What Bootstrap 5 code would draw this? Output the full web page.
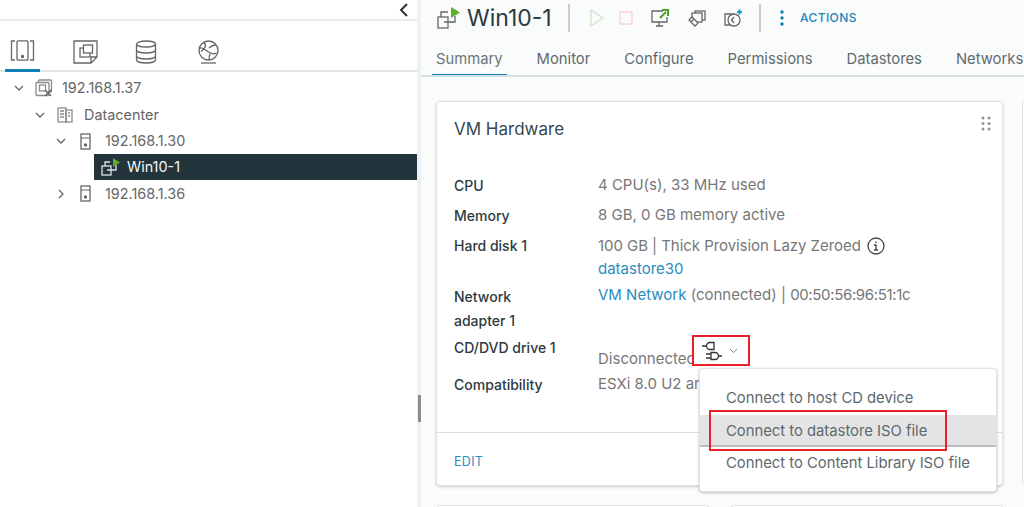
<!DOCTYPE html>
<html lang="en">
<head>
<meta charset="UTF-8" />
<meta name="viewport" content="width=device-width, initial-scale=1" />
<title>Win10-1 - Summary</title>
<link href="https://cdn.jsdelivr.net/npm/bootstrap@5.3.0/dist/css/bootstrap.min.css" rel="stylesheet" />
<script src="https://cdn.jsdelivr.net/npm/bootstrap@5.3.0/dist/js/bootstrap.bundle.min.js"></script>
<style>
    html, body { height: 507px; overflow: hidden; }
    body { font-family: "Inter", "Liberation Sans", sans-serif; font-size: 14px; color: #666; background: #fff; }
    a { text-decoration: none; color: #2b8cbe; }
    svg { display: block; fill: none; stroke: #666; stroke-width: 1.3; }

    /* left tree */
    .side-pane { width: 417px; flex: none; height: 507px; }
    .side-top { height: 21px; border-bottom: 2px solid #e8ecee; padding-right: 8px; }
    .side-tabs { height: 51px; border-bottom: 2px solid #dfe6ea; padding-left: 5px; }
    .side-tab { width: 62px; height: 51px; padding-left: 6px; padding-top: 19px; }
    .side-tab.is-on { width: 35px; margin-right: 27px; padding-left: 5px; border-bottom: 3px solid #0f7fb5; }
    .tree { padding-top: 3px; font-size: 14.4px; }
    .tree-row { height: 26.5px; }
    .tree-arrow { width: 12px; flex: none; }
    .tree-ico { width: 18px; flex: none; margin-left: 10px; }
    .lvl0 { padding-left: 13px; }
    .lvl1 { padding-left: 34px; }
    .lvl2 { padding-left: 55px; }
    .tree-label { margin-left: 9px; }
    .lvl1 .tree-label, .lvl2 .tree-label { margin-left: 10px; }
    .tree-sel { margin: -1px 0 1px 94px; background: #23343d; color: #f4f6f7; height: 26px; padding-left: 7px; }
    .tree-sel .tree-label { margin-left: 7px; }
    .tree-sel svg { stroke: #dfe4e6; }

    .split-bar { width: 4px; flex: none; background: #eef1f3; }
    .split-grip { width: 3px; height: 27px; background: #8b8b8b; margin-top: 395px; margin-left: 1px; }

    /* right pane */
    .main-pane { flex: 1 1 auto; min-width: 0; background: #fafbfb; height: 507px; overflow: hidden; }
    .vm-head { height: 36px; padding-left: 16px; }
    .vm-name { font-size: 23px; color: #2a3a42; margin-left: 7px; line-height: 1; width: 101px; }
    .head-sep { width: 2px; height: 28px; background: #c9cdcf; }
    .act-ico { flex: none; }
    .act-link { font-size: 12px; letter-spacing: .4px; color: #1c85ba; font-weight: 500; }
    .tab-strip { height: 41px; border-bottom: 2px solid #d5dfe4; padding-left: 11px; white-space: nowrap; overflow: hidden; }
    .tab-item { padding: 0 4px; margin-right: 26px; height: 41px; line-height: 46px; color: #5f6b70; font-size: 14.8px; }
    .tab-item.is-on { border-bottom: 3px solid #0f7fb5; color: #6b767b; }
    .cards-wrap { padding: 24px 0 0 15px; gap: 19px; }
    .hw-card { width: 567px; flex: none; height: 385px; border: 1px solid #dfe3e5; border-radius: 4px; box-shadow: 0 1px 3px rgba(0,0,0,.18); background: #fff; position: relative; }
    .hw-next { width: 40px; flex: none; height: 385px; border: 1px solid #dfe3e5; border-radius: 4px; background: #fff; }
    .hw-title { font-size: 17px; color: #37474f; padding: 15px 0 0 17px; height: 73px; }
    .grip-dots { position: absolute; right: 11px; top: 14px; }
    .hw-row { padding-left: 17px; line-height: 21px; }
    .hw-key { width: 144px; flex: none; color: #2d3a40; font-weight: 500; }
    .hw-key-tall { line-height: 24px; margin-top: -1px; }
    .hw-val { color: #777; font-size: 15px; margin-top: -1px; }
    .hw-val-low { margin-top: 11px; }
    .hw-val-high { margin-top: -2px; }
    .hw-disk { margin-top: 0; }
    .hw-disk-line { letter-spacing: -.05px; gap: 6px; }
    .hw-store { display: block; margin-top: 2px; }
    .hw-mac { letter-spacing: -.35px; }
    .hw-clip { width: 101px; overflow: hidden; white-space: nowrap; }
    .card-foot { position: absolute; left: 0; right: 0; top: 330px; border-top: 1px solid #ddd; padding: 17px 17px; }
    .foot-link { font-size: 12.5px; letter-spacing: .3px; }
    .cdrom-box { position: absolute; left: 255px; top: 233px; width: 58px; height: 31px; border: 2px solid #e8202a; background: #fff; padding-left: 7px; }
    .iso-menu { position: absolute; left: 262px; top: 266px; width: 298px; height: 124px; background: #fff; border: 1px solid #e2e2e2; border-radius: 4px; box-shadow: 0 1px 3px rgba(0,0,0,.25); padding-top: 13px; }
    .iso-item { height: 32.5px; line-height: 32.5px; padding-left: 26px; color: #5d696e; font-size: 14.8px; white-space: nowrap; }
    .iso-item.is-hover { background: #e4e4e4; border-bottom: 2px solid #bdbdbd; }
    .iso-mark { position: absolute; left: 9px; top: 41px; width: 238px; height: 41px; border: 2px solid #e8202a; }
    .lower-card { height: 20px; border: 1px solid #dfe3e5; border-radius: 4px; background: #fff; width: 274px; flex: none; }
</style>
</head>
<body class="d-flex">

    <div class="side-pane">
        <div class="side-top d-flex justify-content-end align-items-center">
            <svg width="10" height="14" viewBox="0 0 10 14" style="stroke:#333;stroke-width:2"><path d="M8 1 2 7l6 6"/></svg>
        </div>
        <div class="side-tabs d-flex">
            <div class="side-tab is-on">
                <svg width="25" height="21" viewBox="0 0 25 21"><path d="M5 1H1.500v19H5M20 1h3.500v19H20"/><rect x="7" y=".8" width="11" height="19.400" rx="1"/><circle cx="12.500" cy="16.500" r="1" fill="#666"/></svg>
            </div>
            <div class="side-tab">
                <svg width="25" height="24" viewBox="0 0 25 24"><path d="M1 1h23v16l-6 6H1zM24 17h-6v6"/><rect x="7" y="8" width="10" height="9"/><rect x="10.500" y="5" width="9" height="8" fill="#fff"/></svg>
            </div>
            <div class="side-tab">
                <svg width="22" height="24" viewBox="0 0 22 24"><ellipse cx="11" cy="4" rx="9.500" ry="3"/><path d="M1.500 4v16c0 1.700 4.300 3 9.500 3s9.500-1.300 9.500-3V4M1.500 10c0 1.700 4.300 3 9.500 3s9.500-1.300 9.500-3M1.500 16c0 1.700 4.300 3 9.500 3s9.500-1.300 9.500-3"/></svg>
            </div>
            <div class="side-tab">
                <svg width="23" height="24" viewBox="0 0 23 24"><circle cx="11.500" cy="10.500" r="9.500"/><path d="M2.500 8c4-1 6 2 9 4s5 3 8 1M7 2.500c3 3 1 6-3 9M19 5c-3 0-5 1-7 3M13 14c-1 2-1 4-1 6"/><path d="M4 23h15"/></svg>
            </div>
        </div>
        <div class="tree">
            <div class="tree-row lvl0 d-flex align-items-center">
                <svg class="tree-arrow" width="12" height="8" viewBox="0 0 12 8"><path d="M2 2l4 4 4-4"/></svg>
                <svg class="tree-ico" width="18" height="18" viewBox="0 0 18 18" style="stroke:#8a8a8a"><rect x="3.500" y="1" width="13" height="12" rx="1"/><rect x="1" y="3.500" width="13" height="13" rx="1" fill="#fff"/><rect x="4.500" y="6" width="6" height="6"/><path d="M10 11l6 6M16 11l-6 6" stroke="#666" stroke-width="1.600"/></svg>
                <span class="tree-label">192.168.1.37</span>
            </div>
            <div class="tree-row lvl1 d-flex align-items-center">
                <svg class="tree-arrow" width="12" height="8" viewBox="0 0 12 8"><path d="M2 2l4 4 4-4"/></svg>
                <svg class="tree-ico" width="16" height="16" viewBox="0 0 16 16" style="stroke:#8a8a8a"><rect x="1" y="1" width="8" height="14"/><rect x="9" y="3" width="6" height="12"/><path d="M3 4h4M3 7h4M3 10h4M11 6h2M11 9h2"/></svg>
                <span class="tree-label">Datacenter</span>
            </div>
            <div class="tree-row lvl2 d-flex align-items-center">
                <svg class="tree-arrow" width="12" height="8" viewBox="0 0 12 8"><path d="M2 2l4 4 4-4"/></svg>
                <svg class="tree-ico" width="14" height="17" viewBox="0 0 14 17"><rect x="2" y="1" width="9" height="15"/><path d="M2 5h9" stroke-width="1"/><circle cx="6.500" cy="12" r="1" fill="#666"/></svg>
                <span class="tree-label">192.168.1.30</span>
            </div>
            <div class="tree-sel d-flex align-items-center">
                <svg width="19" height="18" viewBox="0 0 19 18"><rect x="1" y="8" width="9" height="9"/><path d="M4 8V4h5M6 12h9V7"/><path d="M12 0l7 4.500-7 4.500z" fill="#5cb030" stroke="none"/></svg>
                <span class="tree-label">Win10-1</span>
            </div>
            <div class="tree-row lvl2 d-flex align-items-center">
                <svg class="tree-arrow" width="12" height="10" viewBox="0 0 12 10"><path d="M4 1l4 4-4 4"/></svg>
                <svg class="tree-ico" width="14" height="17" viewBox="0 0 14 17"><rect x="2" y="1" width="9" height="15"/><path d="M2 5h9" stroke-width="1"/><circle cx="6.500" cy="12" r="1" fill="#666"/></svg>
                <span class="tree-label">192.168.1.36</span>
            </div>
        </div>
    </div>

    <div class="split-bar"><div class="split-grip"></div></div>

    <div class="main-pane">
        <div class="vm-head d-flex align-items-center">
            <svg width="23" height="22" viewBox="0 0 23 22"><rect x="1" y="10" width="10" height="11"/><path d="M4 10V5h7M7 15h11V9"/><path d="M14 0l9 5.500-9 5.500z" fill="#5cb030" stroke="none"/></svg>
            <span class="vm-name">Win10-1</span>
            <span class="head-sep"></span>
            <svg class="act-ico" style="margin-left:20px;stroke:#cfe3c4" width="14" height="18" viewBox="0 0 14 18"><path d="M1 1l12 8-12 8z"/></svg>
            <svg class="act-ico" style="margin-left:15px;stroke:#fbd1cd" width="14" height="14" viewBox="0 0 14 14"><rect x="1" y="1" width="12" height="12"/></svg>
            <svg class="act-ico" style="margin-left:18px" width="18" height="18" viewBox="0 0 18 18"><path d="M12 2H1v11h15V8M5 17h7M8 13v4"/><path d="M9 9l6-6M11 1h6v6" stroke="#4d9e2c" stroke-width="2"/></svg>
            <svg class="act-ico" style="margin-left:19px" width="18" height="18" viewBox="0 0 18 18"><rect x="7" y="2" width="10" height="9"/><rect x="4" y="4" width="10" height="9" fill="#fafbfb"/><path d="M1 11l6 6 3-3-6-6zM3 13l3-3" fill="#fafbfb"/></svg>
            <svg class="act-ico" style="margin-left:18px" width="18" height="18" viewBox="0 0 18 18"><path d="M1 5h8v11H1z"/><circle cx="10" cy="11" r="6" fill="#fafbfb"/><path d="M10 8l-2.500 3 2.500 3"/><path d="M13 3h5M15.500 .5v5" stroke="#1d9bd8" stroke-width="2"/></svg>
            <span class="head-sep" style="margin-left:17px"></span>
            <svg class="act-ico" style="margin-left:19px;stroke:none" width="4" height="18" viewBox="0 0 4 18"><circle cx="2" cy="3" r="1.700" fill="#0f7fb5"/><circle cx="2" cy="9" r="1.700" fill="#0f7fb5"/><circle cx="2" cy="15" r="1.700" fill="#0f7fb5"/></svg>
            <a href="#" class="act-link" style="margin-left:16px">ACTIONS</a>
        </div>
        <div class="tab-strip d-flex">
            <span class="tab-item is-on">Summary</span>
            <span class="tab-item">Monitor</span>
            <span class="tab-item">Configure</span>
            <span class="tab-item">Permissions</span>
            <span class="tab-item">Datastores</span>
            <span class="tab-item">Networks</span>
        </div>
        <div class="cards-wrap d-flex">
            <div class="hw-card">
                <div class="hw-title">VM Hardware</div>
                <svg class="grip-dots" style="stroke:none" width="10" height="15" viewBox="0 0 10 15"><g fill="#8a979d"><circle cx="2" cy="2" r="1.500"/><circle cx="8" cy="2" r="1.500"/><circle cx="2" cy="7.500" r="1.500"/><circle cx="8" cy="7.500" r="1.500"/><circle cx="2" cy="13" r="1.500"/><circle cx="8" cy="13" r="1.500"/></g></svg>

                <div class="hw-row d-flex" style="height:30px"><div class="hw-key">CPU</div><div class="hw-val">4 CPU(s), 33 MHz used</div></div>
                <div class="hw-row d-flex" style="height:30px"><div class="hw-key">Memory</div><div class="hw-val">8 GB, 0 GB memory active</div></div>
                <div class="hw-row d-flex" style="height:51px">
                    <div class="hw-key">Hard disk 1</div>
                    <div class="hw-val hw-disk">
                        <div class="d-flex align-items-center hw-disk-line">100 GB | Thick Provision Lazy Zeroed
                            <svg width="18" height="18" viewBox="0 0 18 18" style="stroke:#444"><circle cx="9" cy="9" r="8"/><path d="M7 8h2v5M7 13h4M9 4.500v1.500"/></svg>
                        </div>
                        <a href="#" class="hw-store">datastore30</a>
                    </div>
                </div>
                <div class="hw-row d-flex" style="height:51px">
                    <div class="hw-key hw-key-tall">Network<br>adapter 1</div>
                    <div class="hw-val hw-val-high"><a href="#">VM Network</a> (connected) | <span class="hw-mac">00:50:56:96:51:1c</span></div>
                </div>
                <div class="hw-row d-flex" style="height:37px">
                    <div class="hw-key">CD/DVD drive 1</div>
                    <div class="hw-val hw-val-low">Disconnected</div>
                </div>
                <div class="hw-row d-flex">
                    <div class="hw-key">Compatibility</div>
                    <div class="hw-val hw-clip">ESXi 8.0 U2 and later</div>
                </div>

                <div class="card-foot"><a href="#" class="foot-link">EDIT</a></div>

                <div class="cdrom-box d-flex align-items-center gap-1">
                    <svg width="24" height="20" viewBox="0 0 24 20" style="stroke:#333"><path d="M1 5h4M13 1.500H9a3.500 3.500 0 0 0 0 7h4zM13 1v8M10 11.500h4a3.500 3.500 0 0 1 0 7h-4zM10 11v8M5 13h5M5 17h5M18 15h3"/></svg>
                    <svg width="9" height="6" viewBox="0 0 9 6" style="stroke:#888;stroke-width:1"><path d="M1 1l3.500 3.500L8 1"/></svg>
                </div>

                <div class="iso-menu">
                    <div class="iso-item">Connect to host CD device</div>
                    <div class="iso-item is-hover">Connect to datastore ISO file</div>
                    <div class="iso-item">Connect to Content Library ISO file</div>
                    <div class="iso-mark"></div>
                </div>
            </div>
            <div class="hw-next"></div>
        </div>
        <div class="d-flex" style="padding:19px 0 0 15px;gap:20px">
            <div class="lower-card"></div>
            <div class="lower-card"></div>
        </div>
    </div>

</body>
</html>
